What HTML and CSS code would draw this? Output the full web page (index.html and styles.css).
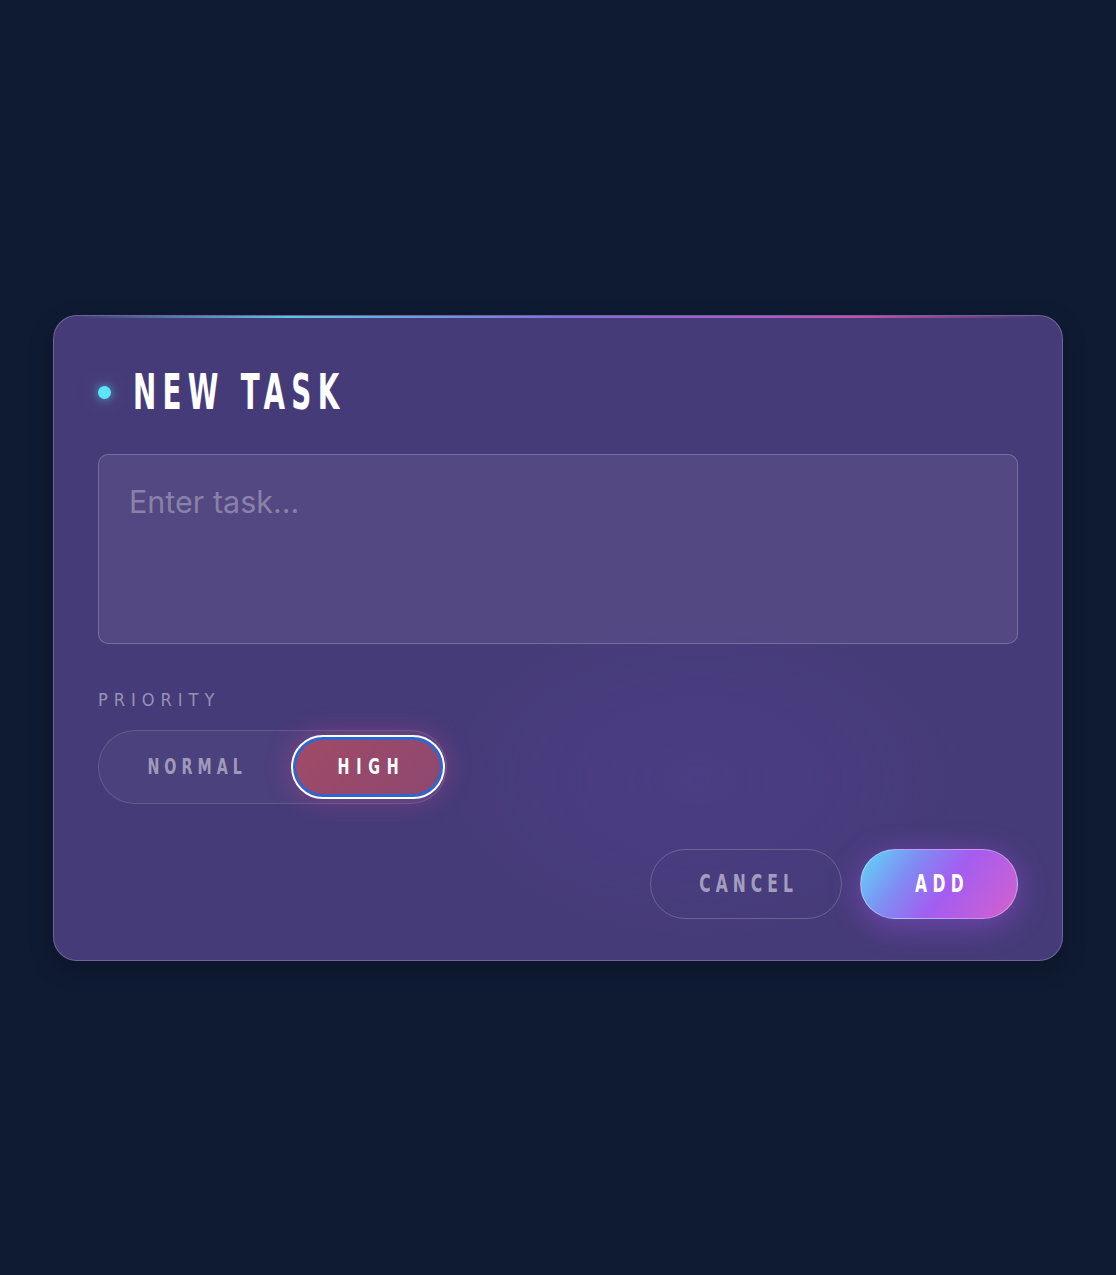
FILE: index.html
```html
<!DOCTYPE html>
<html lang="en">
<head>
<meta charset="utf-8">
<title>New Task</title>
<link rel="stylesheet" href="styles.css">
</head>
<body>
<div class="card">
  <div class="topline"></div>
  <div class="header">
    <span class="dot"></span>
    <h1 class="title"><span class="title-text">NEW TASK</span></h1>
  </div>
  <textarea class="task-input" placeholder="Enter task..."></textarea>
  <div class="label">PRIORITY</div>
  <div class="toggle">
    <button class="opt opt-normal"><span class="cond cond-normal">NORMAL</span></button>
    <button class="opt opt-high"><span class="cond cond-high">HIGH</span></button>
  </div>
  <div class="actions">
    <button class="btn btn-cancel"><span class="cond cond-cancel">CANCEL</span></button>
    <button class="btn btn-add"><span class="cond cond-add">ADD</span></button>
  </div>
</div>
</body>
</html>
```
FILE: styles.css
```css
* { box-sizing: border-box; }
html, body { margin: 0; padding: 0; }
body {
  background: #0f1b33;
  min-height: 1275px;
  display: flex;
  align-items: center;
  justify-content: center;
  font-family: "Inter", "Noto Sans", sans-serif;
}
.card {
  position: relative;
  width: 1010px;
  border: 1px solid rgba(255,255,255,0.22);
  border-radius: 24px;
  padding: 45px 44px 41px 44px;
  background:
    radial-gradient(ellipse 380px 240px at 64% 72%, rgba(92,72,170,0.2), transparent 70%),
    #463b79;
  box-shadow: 0 8px 24px rgba(0,0,0,0.22);
  display: flex;
  flex-direction: column;
}
.topline {
  position: absolute;
  top: 0;
  left: 24px;
  right: 24px;
  height: 2px;
  background: linear-gradient(90deg, rgba(94,224,247,0) 0%, #5ee0f7 22%, #8a7af0 50%, #c45bd8 72%, #e24fae 82%, rgba(226,79,174,0) 100%);
  opacity: 0.85;
}
.header {
  height: 64px;
  display: flex;
  align-items: center;
}
.dot {
  width: 13px;
  height: 13px;
  border-radius: 50%;
  background: #5ee4f9;
  box-shadow: 0 0 10px rgba(94,228,249,0.6), 0 0 22px rgba(94,228,249,0.25);
  margin-right: 22px;
}
.title {
  margin: 0;
  font-family: "DejaVu Sans Condensed", "DejaVu Sans", sans-serif;
  font-stretch: condensed;
  font-weight: 700;
  font-size: 49px;
  line-height: 64px;
  color: #ffffff;
  white-space: nowrap;
}
.title-text {
  display: inline-block;
  letter-spacing: 10px;
  transform: scaleX(0.63);
  transform-origin: left center;
}
.task-input {
  display: block;
  margin-top: 29px;
  width: 100%;
  height: 190px;
  resize: none;
  border: 1px solid rgba(255,255,255,0.2);
  border-radius: 10px;
  background: rgba(255,255,255,0.07);
  padding: 27px 30px;
  font-family: "Inter", "Noto Sans", sans-serif;
  font-size: 30.5px;
  line-height: 40px;
  color: #ffffff;
  outline: none;
}
.task-input::placeholder { color: rgba(255,255,255,0.33); }
.label {
  margin-top: 46px;
  font-family: "DejaVu Sans Condensed", "DejaVu Sans", sans-serif;
  font-stretch: condensed;
  font-size: 18px;
  line-height: 20px;
  letter-spacing: 6px;
  color: rgba(255,255,255,0.45);
}
.toggle {
  margin-top: 20px;
  align-self: flex-start;
  display: flex;
  gap: 4px;
  padding: 4px 1px 4px 4px;
  border: 1px solid rgba(255,255,255,0.13);
  border-radius: 40px;
  background: rgba(255,255,255,0.03);
}
.opt {
  height: 64px;
  border-radius: 32px;
  border: none;
  background: transparent;
  font-family: "DejaVu Sans Condensed", "DejaVu Sans", sans-serif;
  font-stretch: condensed;
  font-size: 22px;
  font-weight: 700;
  padding: 0;
  cursor: pointer;
}
.cond {
  display: inline-block;
  transform: scaleX(0.72);
  transform-origin: center center;
  white-space: nowrap;
}
.cond-normal { letter-spacing: 7px; padding-left: 7px; }
.cond-high { letter-spacing: 9.5px; padding-left: 9.5px; }
.cond-cancel { letter-spacing: 7px; padding-left: 7px; }
.cond-add { letter-spacing: 7.5px; padding-left: 7.5px; }
.opt-normal {
  width: 184px;
  color: rgba(255,255,255,0.48);
}
.opt-high {
  width: 154px;
  color: #ffffff;
  border: 2px solid #ffffff;
  background: linear-gradient(135deg, #a24a67, #8c4870);
  box-shadow: inset 0 0 0 3px #2b67d1, 0 0 26px rgba(236,72,153,0.35);
}
.actions {
  margin-top: 45px;
  display: flex;
  justify-content: flex-end;
  gap: 18px;
}
.btn {
  height: 70px;
  border-radius: 35px;
  font-family: "DejaVu Sans Condensed", "DejaVu Sans", sans-serif;
  font-stretch: condensed;
  font-size: 24px;
  font-weight: 700;
  padding: 0;
  cursor: pointer;
}
.btn-cancel {
  width: 192px;
  border: 1.5px solid rgba(255,255,255,0.2);
  background: transparent;
  color: rgba(255,255,255,0.52);
}
.btn-add {
  width: 158px;
  border: 1.5px solid rgba(255,255,255,0.35);
  background: linear-gradient(125deg, #5fd9f8 0%, #7f8cf3 30%, #a35df0 55%, #d560cd 100%);
  color: #ffffff;
  box-shadow: 0 6px 30px rgba(168,85,247,0.45);
}
```
